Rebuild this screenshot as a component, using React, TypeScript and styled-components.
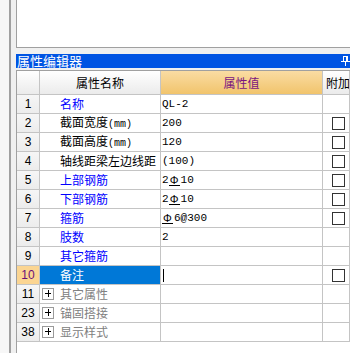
import React from 'react'
import styled, { createGlobalStyle, css } from 'styled-components'

const GlobalStyle = createGlobalStyle`
    html, body {
        margin: 0;
        padding: 0;
        background: #f0f0f0;
    }
    body {
        font-family: "Noto Sans CJK SC", sans-serif;
    }
`

const Frame = styled.div`
    display: flex;
    width: 350px;
    height: 353px;
    overflow: hidden;
    background: #f0f0f0;
`
const SideStrip = styled.div`
    width: 9px;
    background: #f7f7f7;
`
const Splitter = styled.div`
    width: 2px;
    background: #a0a0a0;
    margin-right: 5px;
`
const Main = styled.div`
    flex: 1;
    min-width: 0;
    display: flex;
    flex-direction: column;
`
const TopPanel = styled.div`
    height: 47px;
    flex-shrink: 0;
    background: #ffffff;
    border-left: 1px solid #a0a0a0;
    border-bottom: 1px solid #a0a0a0;
    margin-bottom: 6px;
`
const TitleBar = styled.div`
    height: 14px;
    flex-shrink: 0;
    display: flex;
    align-items: center;
    justify-content: space-between;
    background: #0054e3;
    color: #ffffff;
    font-size: 13px;
    line-height: 14px;
    padding-left: 1px;
    margin-bottom: 2px;
`
const PinIcon = styled.svg`
    width: 9px;
    height: 10px;
`
const Grid = styled.div`
    flex: 1;
    display: flex;
    flex-direction: column;
    background: #ffffff;
    border-top: 1px solid #a0a0a0;
    border-left: 1px solid #a0a0a0;
`
const HeaderRow = styled.div`
    display: flex;
    height: 24px;
    flex-shrink: 0;
    border-bottom: 1px solid #c4c4c4;
    box-sizing: border-box;
`
const BodyRow = styled.div`
    display: flex;
    height: 19px;
    flex-shrink: 0;
    border-bottom: 1px solid #c4c4c4;
    box-sizing: border-box;
`

const cellBase = css`
    box-sizing: border-box;
    border-right: 1px solid #c4c4c4;
    display: flex;
    align-items: center;
    overflow: hidden;
    white-space: nowrap;
`
const HeadCell = styled.div<{ $w?: number; $accent?: boolean }>`
    ${cellBase}
    width: ${p => (p.$w ? `${p.$w}px` : 'auto')};
    flex: ${p => (p.$w ? 'none' : '1')};
    justify-content: ${p => (p.$w ? 'center' : 'flex-start')};
    padding-left: ${p => (p.$w ? '0' : '3px')};
    font-size: 12px;
    color: ${p => (p.$accent ? '#7a1480' : '#000000')};
    background: ${p =>
        p.$accent
            ? 'linear-gradient(#fadca3, #f1c46c)'
            : 'linear-gradient(#ffffff, #ebebeb)'};
`
const NumCell = styled.div<{ $active?: boolean }>`
    ${cellBase}
    width: 23px;
    justify-content: center;
    font-family: "Liberation Sans", Arial, sans-serif;
    font-size: 12px;
    color: ${p => (p.$active ? '#6a1076' : '#000000')};
    background: ${p => (p.$active ? '#fbd592' : 'linear-gradient(#f6f6f6, #ececec)')};
`
const NameCell = styled.div<{ $kind: 'link' | 'plain' | 'group'; $selected?: boolean }>`
    ${cellBase}
    width: 121px;
    padding-left: ${p => (p.$kind === 'group' ? '2px' : '20px')};
    gap: 6px;
    font-size: 12px;
    line-height: 18px;
    color: ${p =>
        p.$selected ? '#ffffff' : p.$kind === 'link' ? '#0000ff' : p.$kind === 'group' ? '#808080' : '#000000'};
    background: ${p => (p.$selected ? '#0078d7' : '#ffffff')};
`
const ValueCell = styled.div`
    ${cellBase}
    width: 162px;
    padding-left: 1px;
    font-family: "Liberation Mono", "Noto Sans CJK SC", monospace;
    font-size: 11px;
    color: #000000;
`
const ExtraCell = styled.div`
    ${cellBase}
    flex: 1;
    padding-left: 9px;
`
const Half = styled.span`
    font-family: "Liberation Mono", monospace;
    font-size: 10px;
`
const Rebar = styled.span`
    display: inline-block;
    width: 11px;
    height: 11px;
    margin: 0 1px 0 0;
    text-align: center;
    font-family: "Liberation Sans", sans-serif;
    font-size: 11px;
    line-height: 10px;
    border-bottom: 1px solid #000;
    box-sizing: border-box;
    vertical-align: -1px;
`
const Check = styled.span`
    width: 13px;
    height: 13px;
    box-sizing: border-box;
    border: 1px solid #333333;
    background: #ffffff;
`
const Expander = styled.span`
    position: relative;
    width: 12px;
    height: 12px;
    flex-shrink: 0;
    box-sizing: border-box;
    border: 1px solid #9a9a9a;
    background: #ffffff;
    &::before,
    &::after {
        content: '';
        position: absolute;
        background: #000000;
    }
    &::before {
        left: 2px;
        top: 4px;
        width: 6px;
        height: 1px;
    }
    &::after {
        left: 5px;
        top: 1px;
        width: 1px;
        height: 7px;
    }
`
const Caret = styled.span`
    width: 1px;
    height: 13px;
    margin-left: 1px;
    background: #000000;
`

interface RowData {
    no: number
    name: string
    unit?: boolean
    kind: 'link' | 'plain' | 'group'
    value?: React.ReactNode
    check?: boolean
    selected?: boolean
}

const bar = (head: string, tail: string) => (
    <span>
        {head}
        <Rebar>Φ</Rebar>
        {tail}
    </span>
)

const rows: RowData[] = [
    { no: 1, name: '名称', kind: 'link', value: 'QL-2' },
    { no: 2, name: '截面宽度', unit: true, kind: 'plain', value: '200', check: true },
    { no: 3, name: '截面高度', unit: true, kind: 'plain', value: '120', check: true },
    { no: 4, name: '轴线距梁左边线距', kind: 'plain', value: '(100)', check: true },
    { no: 5, name: '上部钢筋', kind: 'link', value: bar('2', '10'), check: true },
    { no: 6, name: '下部钢筋', kind: 'link', value: bar('2', '10'), check: true },
    { no: 7, name: '箍筋', kind: 'link', value: bar('', '6@300'), check: true },
    { no: 8, name: '肢数', kind: 'link', value: '2' },
    { no: 9, name: '其它箍筋', kind: 'link' },
    { no: 10, name: '备注', kind: 'link', check: true, selected: true },
    { no: 11, name: '其它属性', kind: 'group' },
    { no: 23, name: '锚固搭接', kind: 'group' },
    { no: 38, name: '显示样式', kind: 'group' },
]

export default function App() {
    return (
        <>
            <GlobalStyle />
            <Frame>
                <SideStrip />
                <Splitter />
                <Main>
                    <TopPanel />
                    <TitleBar>
                        <span>属性编辑器</span>
                        <PinIcon viewBox='0 0 9 10'>
                            <rect x='2.5' y='0.5' width='4' height='5' fill='none' stroke='#fff' />
                            <rect x='5' y='1' width='1' height='4' fill='#fff' />
                            <rect x='0' y='5' width='9' height='1' fill='#fff' />
                            <rect x='4' y='6' width='1' height='4' fill='#fff' />
                        </PinIcon>
                    </TitleBar>
                    <Grid>
                        <HeaderRow>
                            <HeadCell $w={23} />
                            <HeadCell $w={121}>属性名称</HeadCell>
                            <HeadCell $w={162} $accent>属性值</HeadCell>
                            <HeadCell>附加</HeadCell>
                        </HeaderRow>
                        {rows.map(r => (
                            <BodyRow key={r.no}>
                                <NumCell $active={r.selected}>{r.no}</NumCell>
                                <NameCell $kind={r.kind} $selected={r.selected}>
                                    {r.kind === 'group' && <Expander />}
                                    <span>
                                        {r.name}
                                        {r.unit && <Half>(mm)</Half>}
                                    </span>
                                </NameCell>
                                <ValueCell>
                                    {r.selected ? <Caret /> : r.value}
                                </ValueCell>
                                <ExtraCell>{r.check && <Check />}</ExtraCell>
                            </BodyRow>
                        ))}
                    </Grid>
                </Main>
            </Frame>
        </>
    )
}
